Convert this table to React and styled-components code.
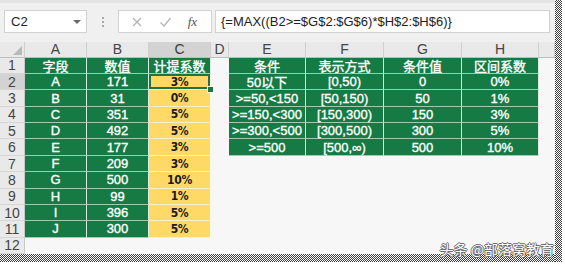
import React from 'react';
import styled, { createGlobalStyle } from 'styled-components';

const GlobalStyle = createGlobalStyle`
  html, body {
    margin: 0;
    padding: 0;
    background: #ffffff;
  }
  body {
    font-family: "Liberation Sans", "Noto Sans CJK SC", sans-serif;
  }
`;

const GREEN = '#157a44';
const YELLOW = '#ffd966';
const SELECT = '#217346';

const Page = styled.div`
  position: relative;
  width: 565px;
  height: 266px;
  display: grid;
  grid-template-columns: 555px 7px;
  grid-template-rows: 254px 8px;
  background: #ffffff;
  overflow: hidden;
`;

const Window = styled.div`
  display: flex;
  flex-direction: column;
  background: #f6f6f6;
  overflow: hidden;
`;

const Dither = styled.div`
  grid-column: ${p => p.$col};
  grid-row: ${p => p.$row};
  background: repeating-conic-gradient(#3c3c3c 0 25%, #ffffff 0 50%) 0 0 / 2px 2px;
`;

const Toolbar = styled.div`
  height: 42px;
  box-sizing: border-box;
  display: flex;
  align-items: flex-start;
  padding: 7px 5px 0 4px;
  border-top: 3px solid #e4e4e4;
  background: #f0f0f0;
`;

const NameBox = styled.div`
  width: 83px;
  height: 23px;
  box-sizing: border-box;
  display: flex;
  align-items: center;
  justify-content: space-between;
  padding: 0 5px 0 6px;
  background: #ffffff;
  border: 1px solid #d2d2d2;
  font-size: 13px;
  color: #222;
`;

const DropArrow = styled.span`
  width: 0;
  height: 0;
  border-left: 4px solid transparent;
  border-right: 4px solid transparent;
  border-top: 4px solid #6a6a6a;
`;

const Grip = styled.div`
  width: 31px;
  height: 23px;
  display: flex;
  flex-direction: column;
  align-items: center;
  justify-content: center;
  gap: 2px;

  span {
    width: 2px;
    height: 2px;
    background: #a8a8a8;
  }
`;

const FxGroup = styled.div`
  width: 94px;
  height: 23px;
  box-sizing: border-box;
  display: flex;
  align-items: center;
  justify-content: space-around;
  padding: 0 6px 0 4px;
  background: #ffffff;
  border: 1px solid #d2d2d2;
`;

const Fx = styled.span`
  font-family: "Liberation Serif", serif;
  font-style: italic;
  font-size: 13px;
  color: #555;
`;

const FormulaBox = styled.div`
  flex: 1;
  height: 23px;
  margin-left: 3px;
  box-sizing: border-box;
  display: flex;
  align-items: center;
  padding-left: 5px;
  background: #ffffff;
  border: 1px solid #d2d2d2;
  font-size: 13px;
  color: #222;
  white-space: nowrap;
`;

const Sheet = styled.div`
  display: grid;
  grid-template-columns: 25px 62px 62px 62px 18px 77px 78px 78px 77px 16px;
  grid-template-rows: 16px repeat(12, 16.36px);
`;

const Corner = styled.div`
  position: relative;
  background: #e9e9e9;
  border-right: 1px solid #cfcfcf;
  border-bottom: 1px solid #bdbdbd;

  &::after {
    content: '';
    position: absolute;
    right: 2px;
    bottom: 2px;
    width: 0;
    height: 0;
    border-left: 9px solid transparent;
    border-bottom: 9px solid #b9b9b9;
  }
`;

const ColHead = styled.div`
  display: flex;
  align-items: center;
  justify-content: center;
  background: ${p => (p.$active ? '#d3d3d3' : '#e9e9e9')};
  border-right: 1px solid #d0d0d0;
  border-bottom: 1px solid #bdbdbd;
  font-size: 14px;
  color: ${p => (p.$active ? '#3b3b3b' : '#444')};
`;

const RowHead = styled.div`
  display: flex;
  align-items: center;
  justify-content: center;
  background: ${p => (p.$active ? '#d3d3d3' : '#e9e9e9')};
  border-right: 1px solid #c9c9c9;
  border-bottom: 1px solid #d6d6d6;
  font-size: 14px;
  color: #444;
`;

const Cell = styled.div`
  position: relative;
  display: flex;
  align-items: center;
  justify-content: center;
  box-sizing: border-box;
  white-space: nowrap;
  font-size: 13px;
  background: ${p => (p.$kind === 'green' ? GREEN : p.$kind === 'yellow' ? YELLOW : '#f7f7f7')};
  color: ${p => (p.$kind === 'green' ? '#ffffff' : '#1a1a1a')};
  -webkit-text-stroke: ${p => (p.$kind === 'green' ? '0.35px #ffffff' : '0')};
  border-right: 1px solid ${p => (p.$kind === 'empty' ? 'transparent' : 'rgba(255,255,255,0.85)')};
  border-bottom: 1px solid ${p => (p.$kind === 'empty' ? 'transparent' : 'rgba(255,255,255,0.6)')};
  box-shadow: ${p => (p.$selected ? `inset 0 0 0 2px ${SELECT}` : 'none')};

  &::after {
    content: '';
    display: ${p => (p.$selected ? 'block' : 'none')};
    position: absolute;
    right: -4px;
    bottom: -4px;
    width: 5px;
    height: 5px;
    background: ${SELECT};
    border: 1px solid #ffffff;
    z-index: 2;
  }
`;

const Percent = styled.span`
  font-family: "DejaVu Sans Condensed", "Liberation Sans", sans-serif;
  font-weight: 700;
  font-size: 12px;
  letter-spacing: -0.3px;
`;

const Watermark = styled.div`
  position: absolute;
  right: 11px;
  top: 241px;
  font-family: "Noto Sans CJK SC", sans-serif;
  font-size: 14px;
  line-height: 16px;
  color: #ffffff;
  text-shadow: -1px 0 #6a6a6a, 1px 0 #6a6a6a, 0 -1px #6a6a6a, 0 1px #6a6a6a;
  white-space: nowrap;
`;

const columns = ['A', 'B', 'C', 'D', 'E', 'F', 'G', 'H', ''];

const fields = [
  ['字段', '数值', '计提系数'],
  ['A', '171', '3%'],
  ['B', '31', '0%'],
  ['C', '351', '5%'],
  ['D', '492', '5%'],
  ['E', '177', '3%'],
  ['F', '209', '3%'],
  ['G', '500', '10%'],
  ['H', '99', '1%'],
  ['I', '396', '5%'],
  ['J', '300', '5%'],
];

const ranges = [
  ['条件', '表示方式', '条件值', '区间系数'],
  ['50以下', '[0,50)', '0', '0%'],
  ['>=50,<150', '[50,150)', '50', '1%'],
  ['>=150,<300', '[150,300)', '150', '3%'],
  ['>=300,<500', '[300,500)', '300', '5%'],
  ['>=500', '[500,∞)', '500', '10%'],
];

const CellText = ({ value, kind }) =>
  kind === 'yellow' ? <Percent>{value}</Percent> : value;

const buildRow = (r) => {
  const left = fields[r] || [];
  const right = ranges[r] || [];
  const cells = [];
  cells.push({ v: left[0], kind: left[0] ? 'green' : 'empty' });
  cells.push({ v: left[1], kind: left[1] ? 'green' : 'empty' });
  cells.push({ v: left[2], kind: r === 0 ? 'green' : left[2] ? 'yellow' : 'empty' });
  cells.push({ v: '', kind: 'empty' });
  for (let i = 0; i < 4; i++) {
    cells.push({ v: right[i], kind: right[i] ? 'green' : 'empty' });
  }
  cells.push({ v: '', kind: 'empty' });
  return cells;
};

const App = () => {
  const rows = Array.from({ length: 12 }, (_, r) => buildRow(r));

  return (
    <>
      <GlobalStyle />
      <Page>
        <Window>
          <Toolbar>
            <NameBox>
              C2
              <DropArrow />
            </NameBox>
            <Grip>
              <span />
              <span />
              <span />
            </Grip>
            <FxGroup>
              <svg width="12" height="12" viewBox="0 0 12 12">
                <path d="M2 2 L10 10 M10 2 L2 10" stroke="#b4b4b4" strokeWidth="1.3" fill="none" />
              </svg>
              <svg width="13" height="12" viewBox="0 0 13 12">
                <path d="M1.5 6.5 L5 10 L11.5 2" stroke="#b4b4b4" strokeWidth="1.3" fill="none" />
              </svg>
              <Fx>fx</Fx>
            </FxGroup>
            <FormulaBox>{'{=MAX((B2>=$G$2:$G$6)*$H$2:$H$6)}'}</FormulaBox>
          </Toolbar>
          <Sheet>
            <Corner />
            {columns.map((c, i) => (
              <ColHead key={i} $active={c === 'C'}>{c}</ColHead>
            ))}
            {rows.map((cells, r) => (
              <React.Fragment key={r}>
                <RowHead $active={r === 1}>{r + 1}</RowHead>
                {cells.map((cell, c) => (
                  <Cell key={c} $kind={cell.kind} $selected={r === 1 && c === 2}>
                    {cell.v && <CellText value={cell.v} kind={cell.kind} />}
                  </Cell>
                ))}
              </React.Fragment>
            ))}
          </Sheet>
        </Window>
        <Dither $col="2" $row="1 / 3" />
        <Dither $col="1" $row="2" />
        <Watermark>头条 @部落窝教育</Watermark>
      </Page>
    </>
  );
};

export default App;
